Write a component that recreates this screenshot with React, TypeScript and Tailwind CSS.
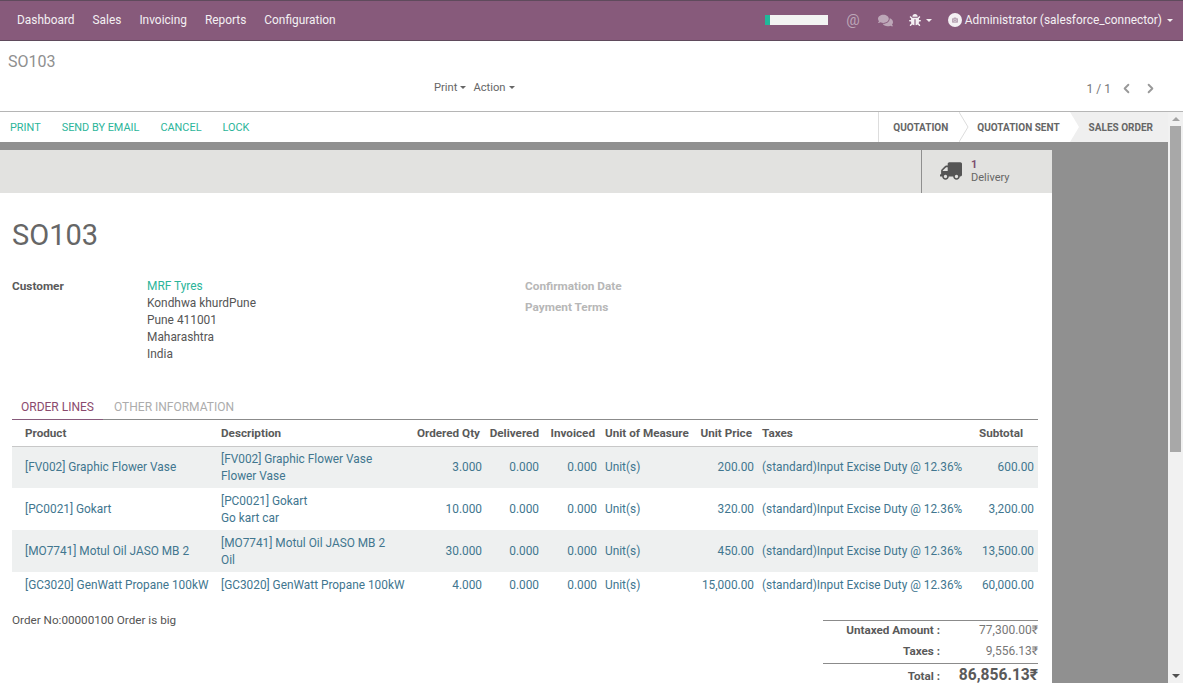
import { ChevronLeft, ChevronRight } from "lucide-react";
import { FaTruck, FaComments, FaBug, FaCamera } from "react-icons/fa";

const menu = ["Dashboard", "Sales", "Invoicing", "Reports", "Configuration"];

const lines = [
  { product: "[FV002] Graphic Flower Vase", desc: ["[FV002] Graphic Flower Vase", "Flower Vase"], qty: "3.000", price: "200.00", sub: "600.00" },
  { product: "[PC0021] Gokart", desc: ["[PC0021] Gokart", "Go kart car"], qty: "10.000", price: "320.00", sub: "3,200.00" },
  { product: "[MO7741] Motul Oil JASO MB 2", desc: ["[MO7741] Motul Oil JASO MB 2", "Oil"], qty: "30.000", price: "450.00", sub: "13,500.00" },
  { product: "[GC3020] GenWatt Propane 100kW", desc: ["[GC3020] GenWatt Propane 100kW"], qty: "4.000", price: "15,000.00", sub: "60,000.00" },
];

function Caret({ className = "ml-1" }: { className?: string }) {
  return <span className={`inline-block align-middle border-x-[3px] border-t-[3px] border-x-transparent border-t-current ${className}`} />;
}

export default function App() {
  return (
    <div className="h-[683px] w-[1183px] overflow-hidden flex flex-col bg-white text-[12px] text-[#4c4c4c] font-['Roboto',sans-serif]">
      <nav className="h-[41px] shrink-0 bg-[#875a7b] border-y border-[#5f4a5c] flex items-center pl-[17px] pr-[10px] text-[11.9px] text-[#f4f0f3]">
        <div className="flex gap-[18px] pt-[1px]">
          {menu.map((m) => <span key={m}>{m}</span>)}
        </div>
        <div className="ml-auto flex items-center">
          <div className="w-[63px] h-[10px] bg-[#f3f4f3] mr-[18px]">
            <div className="w-[5px] h-full bg-[#1fb89a]" />
          </div>
          <span className="text-[15px] leading-none text-[#bda7b8] mr-[18px]">@</span>
          <FaComments className="text-[15px] text-[#bda7b8] mr-[16px]" />
          <FaBug className="text-[12px] text-[#f4f0f3]" />
          <span className="ml-[1px] mr-[16px]"><Caret /></span>
          <span className="w-[14px] h-[14px] rounded-full bg-[#f4f0f3] mr-[3px] flex items-center justify-center">
            <FaCamera className="text-[6px] text-[#b9a5b5]" />
          </span>
          <span className="pt-[1px]">Administrator (salesforce_connector)</span>
          <span className="ml-[1px]"><Caret /></span>
        </div>
      </nav>

      <div className="h-[71px] shrink-0 border-b border-[#b5b5b5] flex flex-col relative">
        <div className="pl-[8px] pt-[11px] text-[16px] leading-[20px] text-[#8f8f8f]">SO103</div>
        <div className="mt-[6px] flex items-center">
          <div className="ml-[434px] flex gap-[7px] text-[#666666] text-[11.2px]">
            <span>Print<Caret className="ml-[3px]" /></span>
            <span>Action<Caret className="ml-[3px]" /></span>
          </div>
          <div className="ml-auto mr-[25px] flex items-center text-[#777777]">
            <span className="mr-[8px] mt-[2px]">1 / 1</span>
            <ChevronLeft size={15} strokeWidth={3} className="text-[#999999] mr-[9px]" />
            <ChevronRight size={15} strokeWidth={3} className="text-[#999999]" />
          </div>
        </div>
      </div>

      <div className="flex-1 min-h-0 flex">
        <div className="flex-1 min-w-0 flex flex-col">
          <div className="h-[30px] shrink-0 flex items-center pl-[10px] text-[10.9px] text-[#2bb59a]">
            <div className="flex gap-[21px] pt-[2px]">
              <span>PRINT</span>
              <span>SEND BY EMAIL</span>
              <span>CANCEL</span>
              <span>LOCK</span>
            </div>
            <div className="ml-auto h-full flex text-[10px] font-bold text-[#666666]">
              <span className="border-l border-[#dddddd] pl-[14px] pr-[11px] flex items-center">QUOTATION</span>
              <span className="relative pl-[18px] pr-[10px] flex items-center">
                <svg className="absolute left-0 top-0 h-full w-[10px]" viewBox="0 0 10 30"><path d="M0 0 L9 15 L0 30" fill="none" stroke="#dddddd" /></svg>
                QUOTATION SENT
              </span>
              <span className="relative pl-[19px] pr-[15px] flex items-center bg-[#efefef]">
                <svg className="absolute left-0 top-0 h-full w-[10px]" viewBox="0 0 10 30"><path d="M0 0 L9 15 L0 30 Z" fill="#ffffff" /></svg>
                SALES ORDER
              </span>
            </div>
          </div>

          <div className="flex-1 min-h-0 bg-[#909090] pt-[8px] overflow-hidden">
            <div className="w-[1052px] bg-white">
              <div className="h-[43px] bg-[#e2e2e0] flex justify-end">
                <div className="w-[131px] border-l border-[#8f8f8f] flex items-center pl-[18px] pb-[2px] text-[#666666]">
                  <FaTruck className="text-[22px] text-[#555555]" style={{ transform: "scaleX(-1)" }} />
                  <div className="ml-[9px] text-[11px] leading-[13px]">
                    <div className="font-bold text-[#7c4f70]">1</div>
                    <div>Delivery</div>
                  </div>
                </div>
              </div>

              <div className="pl-[12px] pr-[14px] pt-[24px] pb-[40px]">
                <h1 className="text-[29px] leading-[36px] text-[#666666]">SO103</h1>

                <div className="mt-[25px] flex h-[104px] leading-[17px]">
                  <div className="w-[135px] font-bold text-[11.8px] text-[#5a5a5a]">Customer</div>
                  <div className="w-[378px] text-[11.9px] text-[#555555]">
                    <div className="text-[#2bb59a]">MRF Tyres</div>
                    <div>Kondhwa khurdPune</div>
                    <div>Pune 411001</div>
                    <div>Maharashtra</div>
                    <div>India</div>
                  </div>
                  <div className="font-bold text-[11.8px] text-[#b7b7b7]">
                    <div>Confirmation Date</div>
                    <div className="mt-[4px]">Payment Terms</div>
                  </div>
                </div>

                <div className="mt-[12px] h-[26px] border-b border-[#8b8b8b] flex text-[12px] leading-[26px]">
                  <div className="w-[91px] pl-[9px] border-b border-[#875a7b] h-[26px] text-[#8a4a6e]">ORDER LINES</div>
                  <div className="pl-[11px] text-[#acacac]">OTHER INFORMATION</div>
                </div>

                <table className="w-[1026px] table-fixed border-collapse text-[11.85px] text-[#41768f]">
                  <colgroup>
                    <col className="w-[205px]" />
                    <col className="w-[196px]" />
                    <col className="w-[73px]" />
                    <col className="w-[57px]" />
                    <col className="w-[58px]" />
                    <col className="w-[95px]" />
                    <col className="w-[62px]" />
                    <col className="w-[208px]" />
                    <col className="w-[72px]" />
                  </colgroup>
                  <thead>
                    <tr className="h-[26px] border-b border-[#c8c8c8] text-[11.7px] font-bold text-[#5a5a5a] whitespace-nowrap">
                      <th className="pl-[13px] pt-[2px] text-left">Product</th>
                      <th className="pl-[4px] pt-[2px] text-left">Description</th>
                      <th className="pr-[6px] pt-[2px] text-right">Ordered Qty</th>
                      <th className="pr-[4px] pt-[2px] text-right">Delivered</th>
                      <th className="pr-[6px] pt-[2px] text-right">Invoiced</th>
                      <th className="pl-[4px] pt-[2px] text-left">Unit of Measure</th>
                      <th className="pr-[6px] pt-[2px] text-right">Unit Price</th>
                      <th className="pl-[4px] pt-[2px] text-left">Taxes</th>
                      <th className="pr-[15px] pt-[2px] text-right">Subtotal</th>
                    </tr>
                  </thead>
                  <tbody>
                    {lines.map((l, i) => (
                      <tr key={l.product} className={i % 2 === 0 ? "bg-[#eef0f0]" : ""}>
                        <td className={`pl-[13px] pt-[1px] whitespace-nowrap ${l.desc.length > 1 ? "h-[42px]" : "h-[26px]"}`}>{l.product}</td>
                        <td className="pl-[4px] pt-[1px] leading-[17px] whitespace-nowrap">
                          {l.desc.map((d) => <div key={d}>{d}</div>)}
                        </td>
                        <td className="pr-[4px] pt-[1px] text-right">{l.qty}</td>
                        <td className="pr-[4px] pt-[1px] text-right">0.000</td>
                        <td className="pr-[4px] pt-[1px] text-right">0.000</td>
                        <td className="pl-[4px] pt-[1px]">Unit(s)</td>
                        <td className="pr-[4px] pt-[1px] text-right">{l.price}</td>
                        <td className="pl-[4px] pt-[1px] whitespace-nowrap">(standard)Input Excise Duty @ 12.36%</td>
                        <td className="pr-[4px] pt-[1px] text-right">{l.sub}</td>
                      </tr>
                    ))}
                  </tbody>
                </table>

                <div className="flex items-start justify-between mt-[14px]">
                  <div className="text-[11.7px] text-[#555555]">Order No:00000100 Order is big</div>
                  <div className="w-[215px] mt-[8px] text-[#5a5a5a]">
                    <div className="border-t border-[#8b8b8b] flex leading-[19px]">
                      <span className="w-[117px] text-right font-bold text-[11.7px]">Untaxed Amount :</span>
                      <span className="flex-1 text-right text-[#777777]">77,300.00₹</span>
                    </div>
                    <div className="flex leading-[20px] mt-[1px] pb-[2px]">
                      <span className="w-[117px] text-right font-bold text-[11.7px]">Taxes :</span>
                      <span className="flex-1 text-right text-[#777777]">9,556.13₹</span>
                    </div>
                    <div className="border-t border-[#8b8b8b] flex items-baseline">
                      <span className="w-[117px] text-right font-bold text-[11.7px]">Total :</span>
                      <span className="flex-1 text-right font-bold text-[15.6px] leading-[22px]">86,856.13₹</span>
                    </div>
                  </div>
                </div>
              </div>
            </div>
          </div>
        </div>

        <div className="w-[15px] shrink-0 bg-[#f1f1f1] flex flex-col items-center">
          <div className="h-[14px] flex items-center"><span className="border-x-[4px] border-b-[4px] border-x-transparent border-b-[#a3a3a3]" /></div>
          <div className="w-[11px] h-[326px] bg-[#a8a8a8]" />
          <div className="mt-auto h-[14px] flex items-center"><span className="border-x-[4px] border-t-[4px] border-x-transparent border-t-[#505050]" /></div>
        </div>
      </div>
    </div>
  );
}
